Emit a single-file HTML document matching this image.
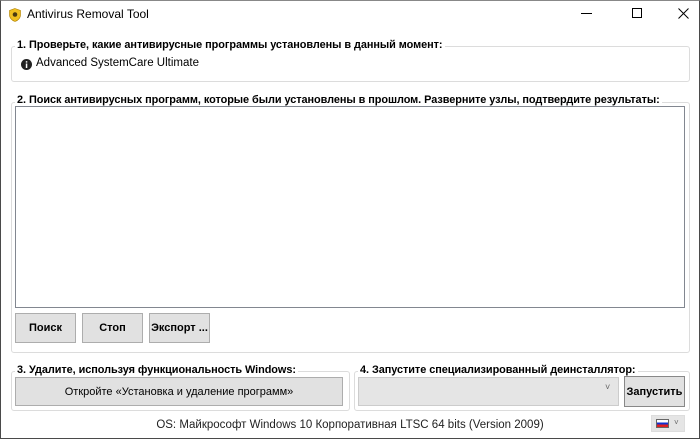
<!DOCTYPE html>
<html><head><style>
*{margin:0;padding:0;box-sizing:border-box}
body{width:700px;height:439px;overflow:hidden;background:#fff;font-family:"Liberation Sans","DejaVu Sans",sans-serif;font-size:11px;color:#000;position:relative}
.win{position:absolute;left:0;top:0;width:700px;height:439px;border:1px solid #4a4a4a;border-top:1px solid #888}
.a{position:absolute}
.grp{position:absolute;border:1px solid #dcdcdc;border-radius:3px}
.lbl{position:absolute;background:#fff;font-weight:bold;font-size:10.9px;padding:0 2px;white-space:nowrap;letter-spacing:-0.05px}
.btn{position:absolute;background:#e1e1e1;border:1px solid #adadad;display:flex;align-items:center;justify-content:center;font-size:11px;white-space:nowrap}
.b{font-weight:bold}
</style></head><body>
<div class="win"></div>
<svg class="a" style="left:9px;top:8px" width="12" height="14" viewBox="0 0 12 14"><path d="M6 0.5 L11.5 2.5 V7 C11.5 10 9 12.5 6 13.5 C3 12.5 0.5 10 0.5 7 V2.5Z" fill="#f0c020" stroke="#b08000" stroke-width=".6"/><circle cx="6" cy="6.5" r="2.3" fill="#4a3a10"/></svg>
<div class="a" style="left:27px;top:7px;font-size:12px">Antivirus Removal Tool</div>
<div class="a" style="left:581px;top:13px;width:11px;height:1px;background:#000"></div>
<div class="a" style="left:632px;top:8px;width:10px;height:10px;border:1px solid #000"></div>
<svg class="a" style="left:678px;top:8px" width="11" height="11"><path d="M0.5 0.5L10.5 10.5M10.5 0.5L0.5 10.5" stroke="#000" stroke-width="1"/></svg>

<div class="grp" style="left:11px;top:46px;width:679px;height:36px"></div>
<div class="lbl" style="left:15px;top:39px">1. Проверьте, какие антивирусные программы установлены в данный момент:</div>
<svg class="a" style="left:21px;top:59px" width="11" height="11"><circle cx="5.5" cy="5.5" r="5.5" fill="#222"/><rect x="4.8" y="4.5" width="1.5" height="4.5" fill="#fff"/><rect x="4.8" y="2.2" width="1.5" height="1.4" fill="#fff"/></svg>
<div class="a" style="left:36px;top:57px;font-size:11.5px">Advanced SystemCare Ultimate</div>

<div class="grp" style="left:11px;top:102px;width:679px;height:251px"></div>
<div class="lbl" style="left:15px;top:94px">2. Поиск антивирусных программ, которые были установлены в прошлом. Разверните узлы, подтвердите результаты:</div>
<div class="a" style="left:15px;top:106px;width:670px;height:202px;border:1px solid #828790;background:#fff"></div>
<div class="btn b" style="left:15px;top:313px;width:61px;height:30px">Поиск</div>
<div class="btn b" style="left:82px;top:313px;width:61px;height:30px">Стоп</div>
<div class="btn b" style="left:149px;top:313px;width:61px;height:30px">Экспорт ...</div>

<div class="grp" style="left:11px;top:371px;width:339px;height:40px"></div>
<div class="lbl" style="left:15px;top:364px">3. Удалите, используя функциональность Windows:</div>
<div class="btn" style="left:15px;top:377px;width:328px;height:29px">Откройте «Установка и удаление программ»</div>

<div class="grp" style="left:354px;top:371px;width:336px;height:40px"></div>
<div class="lbl" style="left:358px;top:364px">4. Запустите специализированный деинсталлятор:</div>
<div class="a" style="left:358px;top:377px;width:261px;height:29px;background:#e5e5e5;border:1px solid #ccc"></div>
<div class="a" style="left:605px;top:382px;font-size:9px;color:#666">˅</div>
<div class="btn b" style="left:624px;top:376px;width:61px;height:31px;border-color:#888">Запустить</div>

<div class="a" style="left:0;top:419px;width:700px;text-align:center;font-size:11.5px;color:#222">OS: Майкрософт Windows 10 Корпоративная LTSC 64 bits (Version 2009)</div>
<div class="a" style="left:651px;top:415px;width:34px;height:17px;background:#e5e5e5;border:1px solid #ddd"></div>
<div class="a" style="left:656px;top:419px;width:13px;height:9px;border:1px solid #666;background:linear-gradient(#fff 33%,#1030d0 33%,#1030d0 66%,#e02020 66%)"></div>
<div class="a" style="left:674px;top:418px;font-size:8px;color:#666">˅</div>
</body></html>
